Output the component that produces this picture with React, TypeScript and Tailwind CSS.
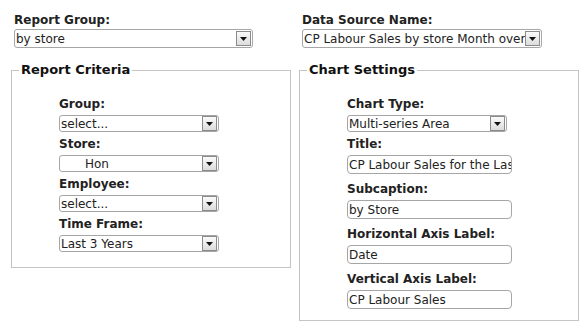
import React from "react";

const font = { fontFamily: '"DejaVu Sans", Verdana, sans-serif' };

const Arrow: React.FC = () => (
  <div className="flex items-center justify-center w-[15px] h-[15px] border border-[#8a8a8a] bg-gradient-to-b from-[#fafafa] to-[#dcdcdc] mr-[1px] shrink-0">
    <svg width="7" height="4" viewBox="0 0 7 4">
      <path d="M0 0 H7 L3.5 4 Z" fill="#111" />
    </svg>
  </div>
);

const Select: React.FC<{ value: string; className?: string; indent?: boolean }> = ({
  value,
  className,
  indent,
}) => (
  <div
    className={
      "flex items-center bg-white border border-[#a6a6a6] rounded-[3px] overflow-hidden " +
      (className ?? "")
    }
  >
    <span
      className={
        "flex-1 whitespace-nowrap overflow-hidden text-[12px] leading-[14px] text-[#222] " +
        (indent ? "pl-[25px]" : "pl-[1px]")
      }
    >
      {value}
    </span>
    <Arrow />
  </div>
);

const Input: React.FC<{ value: string }> = ({ value }) => (
  <div className="flex items-center w-[165px] h-[19px] bg-white border border-[#a6a6a6] rounded-[4px] overflow-hidden mt-[3px] mb-[7px]">
    <span className="whitespace-nowrap text-[12px] leading-[14px] text-[#222] pl-[1px]">
      {value}
    </span>
  </div>
);

const Label: React.FC<{ children: React.ReactNode }> = ({ children }) => (
  <div className="text-[12px] leading-[16px] font-bold text-[#222]">{children}</div>
);

const Field: React.FC<{ label: string; value: string; indent?: boolean }> = ({
  label,
  value,
  indent,
}) => (
  <div>
    <Label>{label}</Label>
    <Select value={value} indent={indent} className="w-[160px] h-[17px] mt-[3px] mb-[4px]" />
  </div>
);

const Legend: React.FC<{ children: React.ReactNode }> = ({ children }) => (
  <legend className="ml-[7px] px-[2px] text-[13px] leading-[16px] font-bold text-[#111]">
    {children}
  </legend>
);

export default function App() {
  return (
    <div className="flex gap-[8px] pl-[11px] pt-[12px] bg-white w-[579px] h-[326px]" style={font}>
      {/* left column */}
      <div className="w-[280px]">
        <div className="pl-[3px]">
          <Label>Report Group:</Label>
          <Select value="by store" className="w-[239px] h-[19px] mt-[1px]" />
        </div>
        <fieldset className="border border-[#c4c4c4] mt-[14px]">
          <Legend>Report Criteria</Legend>
          <div className="pl-[47px] pb-[11px] pt-[18px]">
            <Field label="Group:" value="select..." />
            <Field label="Store:" value="Hon" indent />
            <Field label="Employee:" value="select..." />
            <Field label="Time Frame:" value="Last 3 Years" />
          </div>
        </fieldset>
      </div>

      {/* right column */}
      <div className="w-[280px]">
        <div className="pl-[3px]">
          <Label>Data Source Name:</Label>
          <Select
            value="CP Labour Sales by store Month over Month"
            className="w-[240px] h-[19px] mt-[1px]"
          />
        </div>
        <fieldset className="border border-[#c4c4c4] mt-[14px]">
          <Legend>Chart Settings</Legend>
          <div className="pl-[47px] pb-[4px] pt-[18px]">
            <Field label="Chart Type:" value="Multi-series Area" />
            <Label>Title:</Label>
            <Input value="CP Labour Sales for the Last 3 Years" />
            <Label>Subcaption:</Label>
            <Input value="by Store" />
            <Label>Horizontal Axis Label:</Label>
            <Input value="Date" />
            <Label>Vertical Axis Label:</Label>
            <Input value="CP Labour Sales" />
          </div>
        </fieldset>
      </div>
    </div>
  );
}
